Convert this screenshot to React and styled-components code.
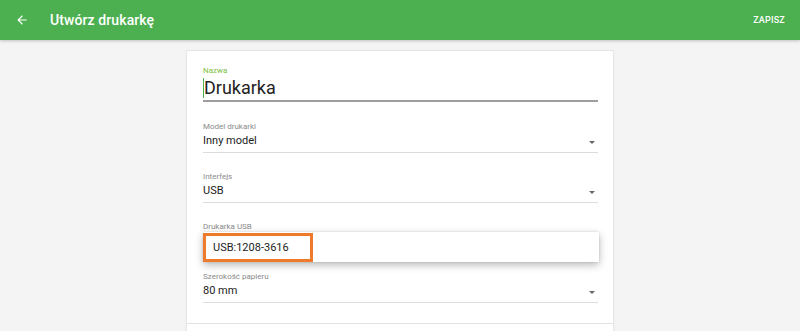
import React from "react";
import styled, { createGlobalStyle } from "styled-components";

const Global = createGlobalStyle`
  html, body { margin: 0; padding: 0; }
  body { background: #f4f4f4; font-family: Roboto, "Noto Sans", sans-serif; overflow: hidden; }
  * { box-sizing: border-box; }
`;

const Page = styled.div`
  width: 800px;
  height: 331px;
  display: flex;
  flex-direction: column;
  background: #f4f4f4;
  overflow: hidden;
`;

const AppBar = styled.header`
  height: 40px;
  flex: 0 0 40px;
  background: #4caf50;
  display: flex;
  align-items: center;
  padding: 0 15px 0 12px;
  box-shadow: 0 1px 3px rgba(0,0,0,0.22);
  position: relative;
  z-index: 2;
`;

const BackButton = styled.div`
  width: 20px;
  height: 20px;
  display: flex;
  align-items: center;
  justify-content: center;
  margin-right: 18px;
`;

const Title = styled.h1`
  margin: 0;
  font-size: 14px;
  font-weight: 500;
  color: #fff;
  flex: 1;
  letter-spacing: 0.1px;
`;

const Action = styled.span`
  font-size: 9px;
  font-weight: 500;
  color: #fff;
  letter-spacing: 0.2px;
`;

const Content = styled.main`
  flex: 1;
  display: flex;
  justify-content: center;
  padding-top: 10px;
`;

const Card = styled.section`
  width: 428px;
  background: #fff;
  border: 1px solid #e6e6e6;
  border-bottom: none;
  border-radius: 2px 2px 0 0;
  box-shadow: 0 0 2px rgba(0,0,0,0.06);
  display: flex;
  flex-direction: column;
`;

const Form = styled.div`
  padding: 15px 15px 20px 16px;
  display: flex;
  flex-direction: column;
`;

const Field = styled.div`
  display: flex;
  flex-direction: column;
  position: relative;
  margin-bottom: ${p => (p.$mb ?? 19)}px;
`;

const Label = styled.label`
  font-size: 8px;
  line-height: 10px;
  color: ${p => (p.$active ? "#7cc143" : "#8a8a8a")};
  margin-bottom: ${p => (p.$gap ?? 2)}px;
`;

const NameInput = styled.div`
  font-size: 18px;
  line-height: 22px;
  color: #222;
  padding-bottom: 1px;
  border-bottom: 2px solid #9e9e9e;
  display: flex;
  align-items: center;
`;

const Caret = styled.span`
  width: 1px;
  height: 20px;
  background: #4caf50;
`;

const Select = styled.div`
  font-size: 11px;
  line-height: 14px;
  color: #222;
  padding-bottom: 4px;
  border-bottom: 1px solid #dcdcdc;
  display: flex;
  align-items: center;
  justify-content: space-between;
`;

const Arrow = styled.span`
  width: 0;
  height: 0;
  border-left: 3.5px solid transparent;
  border-right: 3.5px solid transparent;
  border-top: 3.5px solid #666;
  margin-right: 3px;
  margin-top: 2px;
`;

const Menu = styled.div`
  height: 30px;
  background: #fff;
  box-shadow: 0 3px 8px rgba(0,0,0,0.28), 0 0 2px rgba(0,0,0,0.12);
  display: flex;
  align-items: center;
  margin-right: -1px;
`;

const MenuItem = styled.div`
  height: 29px;
  width: 110px;
  border: 3px solid #f07a2c;
  display: flex;
  align-items: center;
  padding-left: 7px;
  font-size: 11px;
  color: #222;
`;

const Divider = styled.div`
  border-top: 1px solid #e2e2e2;
  height: 10px;
`;

const ArrowLeft = () => (
  <svg width="14" height="14" viewBox="0 0 24 24">
    <path d="M20 11H7.83l5.59-5.59L12 4l-8 8 8 8 1.41-1.41L7.83 13H20v-2z" fill="#fff" />
  </svg>
);

export default function App() {
  return (
    <>
      <Global />
      <Page>
        <AppBar>
          <BackButton><ArrowLeft /></BackButton>
          <Title>Utwórz drukarkę</Title>
          <Action>ZAPISZ</Action>
        </AppBar>
        <Content>
          <Card>
            <Form>
              <Field $mb={20}>
                <Label $active $gap={1}>Nazwa</Label>
                <NameInput><Caret />Drukarka</NameInput>
              </Field>
              <Field>
                <Label>Model drukarki</Label>
                <Select>Inny model<Arrow /></Select>
              </Field>
              <Field>
                <Label>Interfejs</Label>
                <Select>USB<Arrow /></Select>
              </Field>
              <Field $mb={10}>
                <Label $gap={0}>Drukarka USB</Label>
                <Menu>
                  <MenuItem>USB:1208-3616</MenuItem>
                </Menu>
              </Field>
              <Field $mb={0}>
                <Label>Szerokość papieru</Label>
                <Select>80 mm<Arrow /></Select>
              </Field>
            </Form>
            <Divider />
          </Card>
        </Content>
      </Page>
    </>
  );
}
